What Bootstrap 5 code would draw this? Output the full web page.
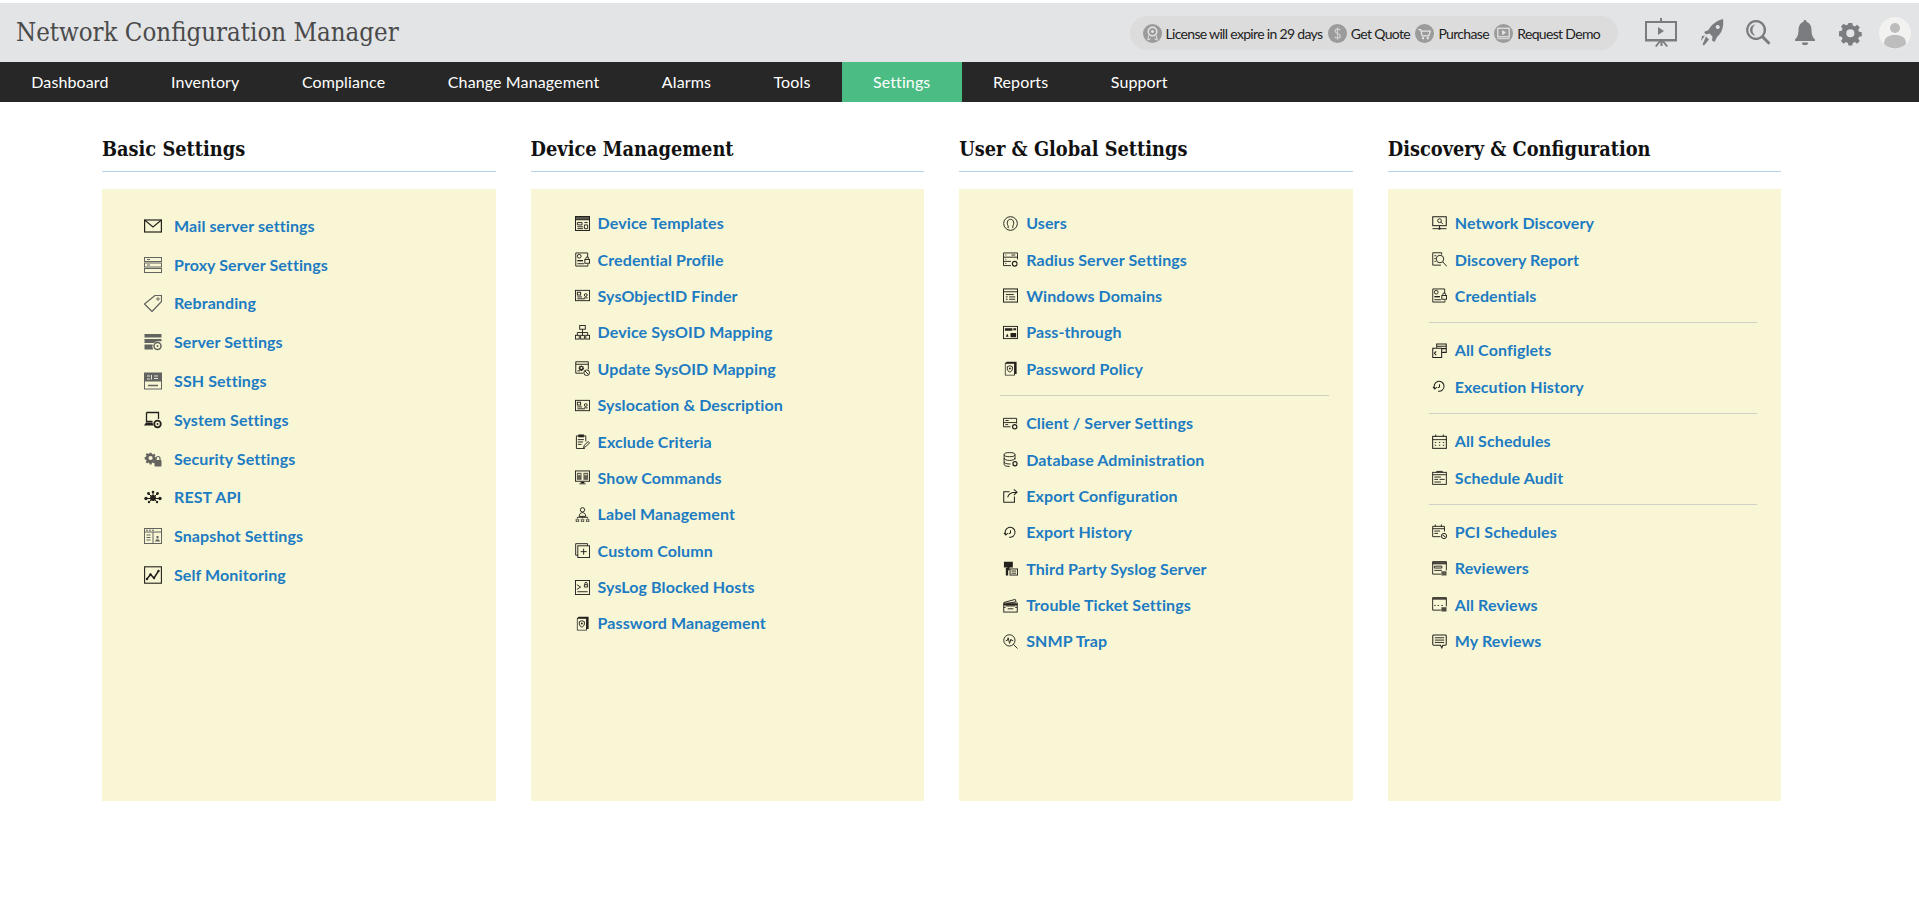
<!DOCTYPE html>
<html lang="en"><head><meta charset="utf-8"><title>Network Configuration Manager</title>
<link href="https://cdn.jsdelivr.net/npm/bootstrap@5.3.0/dist/css/bootstrap.min.css" rel="stylesheet">
<style>
html,body{height:100%;overflow:hidden}
body{background:#fff;font-family:Lato,"Liberation Sans",sans-serif;padding-top:3px}
.top-strip{height:59px;background:#e3e4e6;padding:0 8px 0 16px}
.app-title{font-family:"DejaVu Serif Condensed","DejaVu Serif",serif;font-size:25.6px;font-weight:400;color:#4a4a4a;margin:0}
.promo-pill{height:34px;width:488px;margin-top:1px;margin-right:3px;border-radius:17px;background:#dcdcdc;padding-left:12.5px;color:#222;font-size:14px;letter-spacing:-.68px;white-space:nowrap}
.promo-dot{width:19px;height:19px;flex:none}
.promo-text{margin:0 5.5px 0 4px}
.tool-ico{fill:#7b7c80;color:#7b7c80;flex:none}
.main-tabs{height:40px;background:#272727}
.main-tabs a{display:flex;align-items:center;padding:0 31.25px;color:#fff;font-size:16px;letter-spacing:.12px;text-decoration:none;height:100%}
.main-tabs a.on{background:#4bbc84}
.board{padding:0 0 0 102px;gap:35px}
.group-col{width:393.6px}
.group-head{font-family:"DejaVu Serif Condensed","DejaVu Serif",serif;font-weight:700;font-size:19.8px;color:#111;height:70px;margin:0;padding-top:33px;line-height:28px;border-bottom:1px solid #b5d3ea}
.group-panel{margin-top:17px;height:612px;background:#f9f6d6;padding:16px 24px 0 41px}
.group-panel.wide{padding:17.5px 0 0 42px}
.set-list{margin:0}
.set-row{height:36.4px;display:flex;align-items:center;gap:8px;padding-left:3px}
.set-row svg{width:15px;height:15px;flex:none;color:#24211d}
.set-row a{color:#1d7bc2;font-weight:700;font-size:16px;letter-spacing:.1px;text-decoration:none;white-space:nowrap}
.wide .set-row{height:38.8px;gap:12px;padding-left:0}
.wide .set-row svg{width:18px;height:18px}
.set-rule{height:1px;background:#cfd0c8;margin:8px 0 9px}
.set-row svg.dim{color:#63635f}
</style></head><body>
<svg width="0" height="0" class="position-absolute"><defs>
<g id="g" fill="currentColor"><path d="M4 1.2h1.4l.2 1 .8.3.8-.6 1 1-.6.8.3.8 1 .2v1.400l-1 .2-.3.8.6.8-1 1-.8-.6-.8.3-.2 1H4l-.2-1-.8-.3-.8.6-1-1 .6-.8-.3-.8-1-.2V4.300l1-.2.3-.8-.6-.8 1-1 .8.6.8-.3zM4.700 3.500a1.500 1.500 0 1 0 0 3 1.500 1.500 0 0 0 0-3z"/></g>
<symbol id="mail" viewBox="0 0 18 18"><rect x=".6" y="3" width="16.800" height="12" fill="none" stroke="currentColor" stroke-width="1.200"/><path d="M.6 3 9 10l8.400-7" fill="none" stroke="currentColor" stroke-width="1.100"/></symbol>
<symbol id="proxy" viewBox="0 0 18 18" ><g fill="none" stroke="currentColor"><rect x=".5" y="1.500" width="17" height="4"/><rect x=".5" y="7" width="17" height="4"/><rect x=".5" y="12.500" width="17" height="4"/><path d="M3 3.500h3M3 9h3"/></g></symbol>
<symbol id="tag" viewBox="0 0 18 18"><path d="M11 1.500h6.500v6L8 17.500.5 10z" fill="none" stroke="currentColor" stroke-width="1.200" stroke-linejoin="round"/><circle cx="14" cy="5" r="1.200" fill="none" stroke="currentColor"/></symbol>
<symbol id="srv" viewBox="0 0 18 18"><path d="M.5 1h17v3.500H.5zM.5 6h17v2.200h-4a5 5 0 0 0-3.500 1.800H.5zM.5 11.500h8.300a5 5 0 0 0 .5 5H.500z" fill="currentColor"/><circle cx="13.500" cy="13" r="3.500" fill="none" stroke="currentColor" stroke-width="1.500"/><circle cx="13.500" cy="13" r="1" fill="currentColor"/></symbol>
<symbol id="ssh" viewBox="0 0 18 18"><rect x=".5" y="1" width="17" height="16" fill="none" stroke="currentColor"/><rect x=".5" y="1" width="17" height="8.500" fill="currentColor"/><path d="M3 4h3M3 7h3M7.500 3v4.500M10 4h4M10 6.500h4" stroke="#e8e8e0"/><path d="M4 13.500h10" stroke="currentColor" stroke-width="1.500"/></symbol>
<symbol id="sys" viewBox="0 0 18 18"><path d="M2.500 1.500h12V8" fill="none" stroke="currentColor" stroke-width="1.300"/><path d="M2.500 1.500v9h6" fill="none" stroke="currentColor" stroke-width="1.300"/><path d="M2 11.500h6.500l.8 3H0z" fill="currentColor"/><circle cx="13.500" cy="13" r="3.300" fill="none" stroke="currentColor" stroke-width="1.800"/><circle cx="13.500" cy="13" r=".9" fill="currentColor"/></symbol>
<symbol id="sec" viewBox="0 0 18 18"><use href="#g" transform="translate(0 1) scale(1.400)"/><rect x="10.500" y="10" width="7" height="6.500" rx=".8" fill="currentColor"/><path d="M12 10V8.500a2 2 0 0 1 4 0V10" fill="none" stroke="currentColor" stroke-width="1.200"/></symbol>
<symbol id="rest" viewBox="0 0 18 18" ><g fill="currentColor"><circle cx="9" cy="10" r="3"/><circle cx="2" cy="10.500" r="1.700"/><circle cx="16" cy="10.500" r="1.700"/><circle cx="4.500" cy="5.500" r="1.400"/><circle cx="13.500" cy="5.500" r="1.400"/><circle cx="9" cy="4" r="1.300"/><circle cx="5" cy="14" r="1.200"/><circle cx="13" cy="14" r="1.200"/></g><path d="M2 10.500h14M4.500 5.500 9 10l4.500-4.500M9 4v6M5 14l4-4 4 4" stroke="currentColor" fill="none"/></symbol>
<symbol id="snap" viewBox="0 0 18 18"><g fill="none" stroke="currentColor"><rect x=".5" y="1.500" width="17" height="15"/><path d="M.5 5h17M9 5v11.500M2.500 8h4M2.500 10.500h4M2.500 13h4"/></g><path d="M2 3.200h2M5 3.200h2M8 3.200h2" stroke="currentColor"/><path d="M11 14.500h5l-1-2h-3zM12.500 9h2v2.500h-2z" fill="currentColor"/></symbol>
<symbol id="mon" viewBox="0 0 18 18"><rect x=".6" y=".8" width="16.800" height="16.400" fill="none" stroke="currentColor" stroke-width="1.100"/><path d="m3 13 3.500-4.500 3.500 3.500 4.500-7" fill="none" stroke="currentColor" stroke-width="1.500"/><g fill="currentColor"><circle cx="6.500" cy="8.500" r="1.200"/><circle cx="10" cy="12" r="1.200"/><circle cx="14.500" cy="5" r="1.200"/><circle cx="3" cy="13" r="1.200"/></g></symbol>
<symbol id="tpl" viewBox="0 0 16 16"><g fill="none" stroke="currentColor"><rect x=".5" y=".5" width="15" height="15" stroke-width="1.100"/><path d="M.5 4h15M2.500 7h5v2.500h-5zM2.500 11.500h6M2.500 13.500h6M10 7h3.500M10 9.500h3.500v4H10z"/></g><rect x=".5" y=".5" width="15" height="3.500" fill="currentColor" opacity=".75"/></symbol>
<symbol id="cred" viewBox="0 0 16 16"><g fill="none" stroke="currentColor"><path d="M13.500 6V1H.8v14h13v-2"/><circle cx="4.500" cy="4.500" r="2"/><rect x="10.500" y="8" width="5" height="4"/><path d="M11.500 8V6.800a1.500 1.500 0 0 1 3 0V8"/></g><path d="M2.500 8.500h6v1.500h-6z" fill="currentColor"/><path d="M2.500 12.500h7" stroke="currentColor"/></symbol>
<symbol id="find" viewBox="0 0 16 16"><g fill="none" stroke="currentColor"><rect x=".5" y="2.500" width="15" height="11"/><rect x="2.500" y="4.500" width="3.500" height="3"/><path d="M2.500 9.500h5M2.500 11.500h8"/><circle cx="11.500" cy="7.500" r="1.500"/><path d="M9.500 10.500h4"/></g></symbol>
<symbol id="map" viewBox="0 0 16 16"><g fill="none" stroke="currentColor"><rect x="5" y=".5" width="6" height="4"/><path d="M8 4.500V8M2.500 11V8h11v3M8 8v3"/><rect x=".5" y="11" width="4" height="4"/><rect x="6" y="11" width="4" height="4"/><rect x="11.500" y="11" width="4" height="4"/></g></symbol>
<symbol id="upd" viewBox="0 0 16 16"><g fill="none" stroke="currentColor"><path d="M9 13H.8V.8h13.400V9"/><path d="M.8 3.500h13.400M2.500 10.500h3"/><circle cx="12.500" cy="12.500" r="3"/><path d="m10.500 10.500 4 4"/></g><use href="#g" transform="translate(3.500 4) scale(.7)"/></symbol>
<symbol id="excl" viewBox="0 0 16 16"><g fill="none" stroke="currentColor"><path d="M4 2H1.500v13.500h9M9 2h2.500v6"/><path d="M3 6h6.500M3 8.500h5.500M3 11h4"/></g><rect x="3.500" y=".5" width="6" height="3" fill="currentColor"/><path d="m9 14.500 1-2.500 4-4 1.500 1.500-4 4z" fill="none" stroke="currentColor" stroke-linejoin="round"/></symbol>
<symbol id="cmd" viewBox="0 0 16 16"><rect x=".5" y="1" width="15" height="11" fill="none" stroke="currentColor"/><g fill="currentColor" opacity=".7"><rect x="2" y="3" width="5" height="7.500"/><rect x="9" y="3" width="5" height="7.500"/></g><path d="M3 5h3M10 5h3" stroke="#f9f6d6"/><path d="M6 12.500h4v1.500H6zM4.500 14.500h7v.8h-7z" fill="currentColor"/></symbol>
<symbol id="lbl" viewBox="0 0 16 16"><g fill="none" stroke="currentColor"><circle cx="8" cy="3" r="2.300"/><path d="M4.500 10c0-2.500 1.500-4 3.500-4s3.500 1.500 3.500 4zM8 10v1.500M2.500 12V11h11v1"/><path d="m2.500 12.500.8 1.200h1l-.7.900.3 1.100-1.400-.5-1.400.5.300-1.100-.7-.9h1zM8 12.500l.8 1.200h1l-.7.900.3 1.100L8 15.200l-1.400.5.300-1.100-.7-.9h1zM13.500 12.500l.8 1.200h1l-.7.900.3 1.100-1.400-.5-1.400.5.300-1.100-.7-.9h1z" stroke-width=".8"/></g></symbol>
<symbol id="col" viewBox="0 0 16 16"><g fill="none" stroke="currentColor"><path d="M3 13H.7V.7h12.600V3"/><rect x="3" y="3" width="12.500" height="12.500"/><path d="M9.200 6v6.500M6 9.200h6.500"/></g></symbol>
<symbol id="blk" viewBox="0 0 16 16"><g fill="none" stroke="currentColor"><rect x=".5" y=".5" width="15" height="15"/><path d="m2 5 4 2.500L2 10M2.500 12.500h11M10 7.500h3.500V5H10z"/><path d="M10.500 5V3.800a1.300 1.300 0 0 1 2.600 0V5"/></g></symbol>
<symbol id="pwd" viewBox="0 0 16 16"><path d="M4 .8h10.500v13H12.700V15.500H2V2.500z" fill="currentColor"/><rect x="2.800" y="3" width="9" height="11.700" fill="#f9f6d6"/><path d="M7.300 5 10 6v2.500c0 1.500-1.200 2.700-2.700 3.300C5.800 11.200 4.600 10 4.600 8.500V6z" fill="none" stroke="currentColor"/><circle cx="7.300" cy="8" r="1" fill="currentColor"/></symbol>
<symbol id="usr" viewBox="0 0 16 16"><circle cx="8" cy="8" r="7.300" fill="none" stroke="currentColor"/><path d="M5.500 13V10.500C4 9 4 3.500 8 3.500s4 5.500 2.500 7V13" fill="none" stroke="currentColor"/></symbol>
<symbol id="rad" viewBox="0 0 16 16"><g fill="none" stroke="currentColor"><path d="M8.500 14.500H.5V1h15v7"/><path d="M.5 5.500h15M.5 10h8M2.500 3.200h1M2.500 7.800h1M2.500 12.300h1M9 3.200h4"/><circle cx="12.500" cy="12.500" r="2.500" stroke-width="1.200"/></g></symbol>
<symbol id="win" viewBox="0 0 16 16"><g fill="none" stroke="currentColor"><rect x=".5" y="1" width="15" height="14" stroke-width="1.100"/><path d="M.5 4h15M3 7h8.500M3 9.500h2M6.500 9.500h6.500M3 12h2M6.500 12h6.500"/></g></symbol>
<symbol id="pas" viewBox="0 0 16 16"><rect x=".5" y="1.500" width="15" height="13" fill="none" stroke="currentColor"/><path d="M2 3.500h8v2.500H2zM3 12.500l1.500-3.500L6 12.500zM8 8.500h6v4.500H8zM11 3.500h3v2h-3z" fill="currentColor"/></symbol>
<symbol id="cli" viewBox="0 0 16 16"><g fill="none" stroke="currentColor"><path d="M8 11.500H.5v-9h14V8M.5 7h14M2.500 4.800H6M2.500 9.200h3"/><circle cx="12.500" cy="11.500" r="2.300" stroke-width="1.300"/></g></symbol>
<symbol id="db" viewBox="0 0 16 16"><g fill="none" stroke="currentColor"><ellipse cx="7" cy="2.800" rx="5.800" ry="2.200"/><path d="M1.200 2.800v10.500C1.200 14.500 4 15.500 7 15.500M12.800 2.800V8M1.200 6.500C1.200 8 4 9 7 9s5.800-1 5.800-2.500M1.200 10.500C1.200 12 4 12.800 8 12.800"/><circle cx="12.800" cy="12.500" r="2.200" stroke-width="1.300"/></g></symbol>
<symbol id="exp" viewBox="0 0 16 16"><g fill="none" stroke="currentColor" stroke-width="1.100"><path d="M7 4H.8v11.200h11.400V9"/><path d="M5 10c.5-3.500 3-5.500 9-5.500M11.500 1.500l3.500 3-3.500 3"/></g></symbol>
<symbol id="his" viewBox="0 0 16 16"><g fill="none" stroke="currentColor" stroke-width="1.100"><path d="M3 10.500A5.300 5.300 0 1 1 6.500 13"/><path d="m1 8.500 2 2.200 2-2M8 5.500v3l-2 1"/></g></symbol>
<symbol id="thd" viewBox="0 0 16 16"><path d="M1 .8h9.500v6H7v3H4.500v-3H1z" fill="currentColor"/><path d="M3 7.500h2.500v8H3zM3 12h4" fill="currentColor"/><g fill="none" stroke="currentColor"><rect x="7.500" y="8.500" width="8" height="6.500"/><path d="M9 10.700h5M9 13h5"/></g></symbol>
<symbol id="tik" viewBox="0 0 16 16"><g fill="none" stroke="currentColor"><rect x=".8" y="5.500" width="14.400" height="9.500"/><path d="M.8 4.800 13 1.500l1 2.500-10 2M3 8.500h10M5 11.500h6M.8 10h2M13 10h2"/></g><path d="M.8 6h14.400v2H.8z" fill="currentColor"/></symbol>
<symbol id="snm" viewBox="0 0 16 16"><g fill="none" stroke="currentColor"><circle cx="6.800" cy="6.800" r="6"/><path d="m11 11 4.500 4.500M3 7h1.500l1-3 1.500 6 1.500-4.500.8 1.500h1.500"/></g></symbol>
<symbol id="ndc" viewBox="0 0 16 16"><g fill="none" stroke="currentColor"><rect x=".8" y=".8" width="14.400" height="9.500" stroke-width="1.100"/><circle cx="8" cy="5" r="2"/><path d="m9.500 6.500 2 2M8 10.300v3M.5 13.500h15"/></g><circle cx="8" cy="13.500" r="1.200" fill="currentColor"/></symbol>
<symbol id="drp" viewBox="0 0 16 16"><g fill="none" stroke="currentColor"><path d="M9.500 14H.8V.8h9.500v2"/><circle cx="8.500" cy="7.500" r="4"/><path d="m11.500 10.500 4.500 5M2.500 4h2M2.500 7h1.500M2.500 10h1.500"/></g></symbol>
<symbol id="cfg" viewBox="0 0 16 16"><g fill="none" stroke="currentColor" stroke-width="1.100"><path d="M.8 5.500h9.500v10H.8z"/><path d="M5 5V1h10.200v9H10.500M5 3.500h10M10.500 6h4.700"/><path d="m4.500 9-2 2 2 2"/></g></symbol>
<symbol id="cal" viewBox="0 0 16 16"><g fill="none" stroke="currentColor"><rect x=".7" y="2.500" width="14.600" height="12.800" stroke-width="1.100"/><path d="M.7 6h14.600M4 .5V3M12 .5V3M3 9h1.500M7.300 9h1.500M11.500 9H13M3 12h1.500M7.300 12h1.500M11.500 12H13"/></g></symbol>
<symbol id="aud" viewBox="0 0 16 16"><g fill="none" stroke="currentColor"><rect x=".7" y="2.500" width="14.600" height="12.800"/><path d="M.7 5h14.600M2.500 7.500h7M2.500 10h4M8 10h5.500M2.500 12.800h7M5 2.500V1.500h6v1"/></g></symbol>
<symbol id="pci" viewBox="0 0 16 16"><g fill="none" stroke="currentColor"><path d="M9 13.500H.7V2.500h12.600V8M.7 5h12.600M3.500.5V3M10 .5V3M2.500 7.500h6M2.500 10h4"/><circle cx="12.800" cy="12.800" r="2.800"/><path d="m11 11.500 3.500 2.500"/></g></symbol>
<symbol id="rev" viewBox="0 0 16 16"><g fill="none" stroke="currentColor"><path d="M9.500 14H.7V.7h14.600V10"/><path d="M.7 3h14.600M2.500 5.500h8v2h-8zM2.500 10h8"/></g><path d="M.7.700h14.600V3H.7zM10 11h5.500v4.500H10z" fill="currentColor" opacity=".75"/></symbol>
<symbol id="allr" viewBox="0 0 16 16"><g fill="none" stroke="currentColor"><path d="M9.500 14H.7V.7h14.600V10"/><path d="M2.500 9h1.500M6 9h1.500M10 9h1.500"/></g><path d="M.7.700h14.600V3H.7zM10 11h5.500v4.500H10z" fill="currentColor" opacity=".8"/></symbol>
<symbol id="myr" viewBox="0 0 16 16"><path d="M1.800 1h12.400q1 0 1 1v9q0 1-1 1H11.500l-1 2.800-1.500-2.800H1.800q-1 0-1-1V2q0-1 1-1z" fill="none" stroke="currentColor" stroke-width="1.100"/><path d="M3 4h10M3 6.500h10M3 9h10" stroke="currentColor"/></symbol>
</defs></svg>

<header class="top-strip d-flex align-items-center">
<h1 class="app-title flex-grow-1">Network Configuration Manager</h1>
<div class="promo-pill d-flex align-items-center">
 <svg class="promo-dot" viewBox="0 0 20 20"><circle cx="10" cy="10" r="10" fill="#9b9b9b"/><circle cx="10" cy="8" r="4.500" fill="none" stroke="#e6e6e6" stroke-width="1.500"/><circle cx="10" cy="8" r="1.500" fill="#e6e6e6"/><path d="m6 12-1 5 3-1.500M14 12l1 5-3-1.500" fill="none" stroke="#e6e6e6"/></svg>
 <span class="promo-text">License will expire in 29 days</span>
 <svg class="promo-dot" viewBox="0 0 20 20"><circle cx="10" cy="10" r="10" fill="#9b9b9b"/><path d="M13 6.500C12 5 7.500 5 7.500 7.500s5.500 2 5.500 5-5 2.500-6 1M10 3.500v13" fill="none" stroke="#cfcfcf" stroke-width="1.300"/></svg>
 <span class="promo-text">Get Quote</span>
 <svg class="promo-dot" viewBox="0 0 20 20"><circle cx="10" cy="10" r="10" fill="#9b9b9b"/><path d="M3.500 6H6l1.500 6.500h7l1.500-5H6.500" fill="none" stroke="#e6e6e6" stroke-width="1.300"/><circle cx="8.500" cy="15" r="1.200" fill="#e6e6e6"/><circle cx="13.500" cy="15" r="1.200" fill="#e6e6e6"/></svg>
 <span class="promo-text">Purchase</span>
 <svg class="promo-dot" viewBox="0 0 20 20"><circle cx="10" cy="10" r="10" fill="#9b9b9b"/><rect x="4" y="4.500" width="12" height="9" fill="none" stroke="#e6e6e6" stroke-width="1.300"/><path d="M9 7v4l3-2zM3.500 15.500h13" fill="#e6e6e6" stroke="#e6e6e6"/></svg>
 <span class="promo-text">Request Demo</span>
</div>
<svg class="tool-ico ms-4" width="32" height="29" viewBox="0 0 32 29"><path d="M15 0h2v3h15v20H19l4 5-1.500 1-4-5v4h-2v-4l-4 5-1.500-1 4-5H0V3h15zM2 5v16h28V5z"/><path d="M13 9v8l6-4z"/><path d="M0 21h32v2.500H0z"/></svg>
<svg class="tool-ico" style="margin-left:24px" width="23" height="27" viewBox="0 0 23 27"><path d="M22 0C15 2 10 6 7.500 11L3 13l2 2.500 3.500-1 3 3-.5 4 2.500 1.500 2.500-5C21 14 23 7 22 0zM15 7a2 2 0 1 1 3.500 2A2 2 0 0 1 15 7z"/><path d="m5 17.500 3 3-5 6-1.500-1zM1 17l3-.5-4 5.500z"/></svg>
<svg class="tool-ico" style="margin-left:22px" width="25" height="25" viewBox="0 0 25 25"><path d="M10 0a10 10 0 1 0 5.800 18.200l6.700 6.500 2-2-6.500-6.700A10 10 0 0 0 10 0zm0 2.300a7.700 7.700 0 1 1 0 15.400 7.700 7.700 0 0 1 0-15.400z"/><path d="M9.500 4.500a5.500 5.500 0 0 0 0 11c-2-1-3-3-3-5.500s1-4.500 3-5.500z"/></svg>
<svg class="tool-ico" style="margin-left:24px" width="20" height="25" viewBox="0 0 20 25"><path d="M10 0c1 0 1.500.7 1.500 1.700C15 3 16.500 6 16.500 10c0 5 1.500 7.500 3.500 9.500V21H0v-1.500C2 17.500 3.500 15 3.500 10c0-4 1.500-7 5-8.300C8.500.7 9 0 10 0zM7 22.500h6a3 3 0 0 1-6 0z"/></svg>
<svg class="tool-ico" style="margin-left:22px" width="27" height="27" viewBox="0 0 10 10"><use href="#g" transform="translate(.25 .25)"/></svg>
<svg class="flex-none" style="margin-left:15px" width="32" height="32" viewBox="0 0 32 32"><circle cx="16" cy="16" r="16" fill="#f2f2f1"/><circle cx="16" cy="11" r="5" fill="#bdbdbd"/><path d="M5 27c0-7 5-9 11-9s11 2 11 9a16 16 0 0 1-22 0z" fill="#bdbdbd"/></svg>
</header>

<nav class="main-tabs d-flex">
<a href="#">Dashboard</a><a href="#">Inventory</a><a href="#">Compliance</a><a href="#">Change Management</a><a href="#">Alarms</a><a href="#">Tools</a><a href="#" class="on">Settings</a><a href="#">Reports</a><a href="#">Support</a>
</nav>

<main class="board d-flex">
<section class="group-col">
<h2 class="group-head">Basic Settings</h2>
<div class="group-panel wide"><ul class="set-list list-unstyled">
<li class="set-row"><svg><use href="#mail"/></svg><a href="#">Mail server settings</a></li>
<li class="set-row"><svg class="dim"><use href="#proxy"/></svg><a href="#">Proxy Server Settings</a></li>
<li class="set-row"><svg class="dim"><use href="#tag"/></svg><a href="#">Rebranding</a></li>
<li class="set-row"><svg class="dim"><use href="#srv"/></svg><a href="#">Server Settings</a></li>
<li class="set-row"><svg class="dim"><use href="#ssh"/></svg><a href="#">SSH Settings</a></li>
<li class="set-row"><svg><use href="#sys"/></svg><a href="#">System Settings</a></li>
<li class="set-row"><svg class="dim"><use href="#sec"/></svg><a href="#">Security Settings</a></li>
<li class="set-row"><svg><use href="#rest"/></svg><a href="#">REST API</a></li>
<li class="set-row"><svg class="dim"><use href="#snap"/></svg><a href="#">Snapshot Settings</a></li>
<li class="set-row"><svg><use href="#mon"/></svg><a href="#">Self Monitoring</a></li>
</ul></div>
</section>
<section class="group-col">
<h2 class="group-head">Device Management</h2>
<div class="group-panel"><ul class="set-list list-unstyled">
<li class="set-row"><svg><use href="#tpl"/></svg><a href="#">Device Templates</a></li>
<li class="set-row"><svg><use href="#cred"/></svg><a href="#">Credential Profile</a></li>
<li class="set-row"><svg><use href="#find"/></svg><a href="#">SysObjectID Finder</a></li>
<li class="set-row"><svg><use href="#map"/></svg><a href="#">Device SysOID Mapping</a></li>
<li class="set-row"><svg><use href="#upd"/></svg><a href="#">Update SysOID Mapping</a></li>
<li class="set-row"><svg><use href="#find"/></svg><a href="#">Syslocation &amp; Description</a></li>
<li class="set-row"><svg><use href="#excl"/></svg><a href="#">Exclude Criteria</a></li>
<li class="set-row"><svg><use href="#cmd"/></svg><a href="#">Show Commands</a></li>
<li class="set-row"><svg><use href="#lbl"/></svg><a href="#">Label Management</a></li>
<li class="set-row"><svg><use href="#col"/></svg><a href="#">Custom Column</a></li>
<li class="set-row"><svg><use href="#blk"/></svg><a href="#">SysLog Blocked Hosts</a></li>
<li class="set-row"><svg><use href="#pwd"/></svg><a href="#">Password Management</a></li>
</ul></div>
</section>
<section class="group-col">
<h2 class="group-head">User &amp; Global Settings</h2>
<div class="group-panel"><ul class="set-list list-unstyled">
<li class="set-row"><svg><use href="#usr"/></svg><a href="#">Users</a></li>
<li class="set-row"><svg><use href="#rad"/></svg><a href="#">Radius Server Settings</a></li>
<li class="set-row"><svg><use href="#win"/></svg><a href="#">Windows Domains</a></li>
<li class="set-row"><svg><use href="#pas"/></svg><a href="#">Pass-through</a></li>
<li class="set-row"><svg><use href="#pwd"/></svg><a href="#">Password Policy</a></li>
<li class="set-rule"></li>
<li class="set-row"><svg><use href="#cli"/></svg><a href="#">Client / Server Settings</a></li>
<li class="set-row"><svg><use href="#db"/></svg><a href="#">Database Administration</a></li>
<li class="set-row"><svg><use href="#exp"/></svg><a href="#">Export Configuration</a></li>
<li class="set-row"><svg><use href="#his"/></svg><a href="#">Export History</a></li>
<li class="set-row"><svg><use href="#thd"/></svg><a href="#">Third Party Syslog Server</a></li>
<li class="set-row"><svg><use href="#tik"/></svg><a href="#">Trouble Ticket Settings</a></li>
<li class="set-row"><svg><use href="#snm"/></svg><a href="#">SNMP Trap</a></li>
</ul></div>
</section>
<section class="group-col">
<h2 class="group-head">Discovery &amp; Configuration</h2>
<div class="group-panel"><ul class="set-list list-unstyled">
<li class="set-row"><svg><use href="#ndc"/></svg><a href="#">Network Discovery</a></li>
<li class="set-row"><svg><use href="#drp"/></svg><a href="#">Discovery Report</a></li>
<li class="set-row"><svg><use href="#cred"/></svg><a href="#">Credentials</a></li>
<li class="set-rule"></li>
<li class="set-row"><svg><use href="#cfg"/></svg><a href="#">All Configlets</a></li>
<li class="set-row"><svg><use href="#his"/></svg><a href="#">Execution History</a></li>
<li class="set-rule"></li>
<li class="set-row"><svg><use href="#cal"/></svg><a href="#">All Schedules</a></li>
<li class="set-row"><svg><use href="#aud"/></svg><a href="#">Schedule Audit</a></li>
<li class="set-rule"></li>
<li class="set-row"><svg><use href="#pci"/></svg><a href="#">PCI Schedules</a></li>
<li class="set-row"><svg><use href="#rev"/></svg><a href="#">Reviewers</a></li>
<li class="set-row"><svg><use href="#allr"/></svg><a href="#">All Reviews</a></li>
<li class="set-row"><svg><use href="#myr"/></svg><a href="#">My Reviews</a></li>
</ul></div>
</section>
</main>
<script src="https://cdn.jsdelivr.net/npm/bootstrap@5.3.0/dist/js/bootstrap.bundle.min.js"></script>
</body></html>
